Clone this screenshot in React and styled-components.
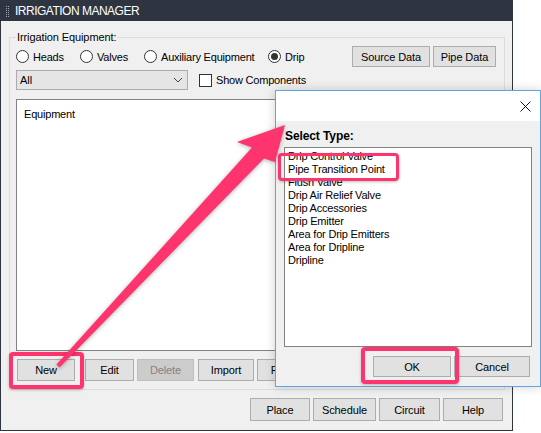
import React from 'react';
import styled, { createGlobalStyle } from 'styled-components';

const PINK = '#fd346e';

const GlobalStyle = createGlobalStyle`
  html, body {
    margin: 0;
    padding: 0;
    background: #fff;
  }
  body {
    font-family: "Liberation Sans", Arial, sans-serif;
    font-size: 11px;
    color: #000;
  }
  * {
    box-sizing: border-box;
  }
`;

const Stage = styled.div`
  position: relative;
  width: 541px;
  height: 433px;
  overflow: hidden;
`;

const Window = styled.div`
  width: 513px;
  height: 431px;
  background: #f0f0f0;
  border: 1px solid #2e3440;
  display: flex;
  flex-direction: column;
`;

const TitleBar = styled.div`
  height: 20px;
  flex-shrink: 0;
  background: #2e3440;
  color: #fff;
  display: flex;
  align-items: center;
  gap: 6px;
  padding-left: 5px;
  font-size: 12px;
  letter-spacing: -0.5px;

  .grip {
    width: 3px;
    height: 11px;
    background-image:
      linear-gradient(to right, transparent 1px, #2e3440 1px),
      linear-gradient(to bottom, #a3a9b4 1px, transparent 1px);
    background-size: 2px 2px, 2px 2px;
  }
`;

const Group = styled.fieldset`
  margin: 9px 7px 0 8px;
  padding: 0 7px 0 6px;
  height: 360px;
  border: 1px solid #dcdcdc;
  display: flex;
  flex-direction: column;

  legend {
    padding: 0 1px;
    font-size: 11px;
    line-height: 14px;
    letter-spacing: -0.1px;
  }
`;

const Row = styled.div`
  display: flex;
  align-items: center;
  height: ${p => p.h}px;
  margin-top: ${p => p.mt}px;
`;

const RadioItem = styled.label`
  display: flex;
  align-items: center;
  gap: 4px;
  width: ${p => p.w}px;
  letter-spacing: -0.2px;
`;

const RadioDot = styled.span`
  width: 13px;
  height: 13px;
  border-radius: 50%;
  border: 1px solid #333;
  background: #fff;
  display: flex;
  align-items: center;
  justify-content: center;

  &::after {
    content: '';
    width: 7px;
    height: 7px;
    border-radius: 50%;
    background: ${p => (p.checked ? '#333' : 'transparent')};
  }
`;

const Button = styled.button`
  width: ${p => p.w}px;
  height: ${p => p.h || 22}px;
  margin-left: ${p => p.ml || 0}px;
  padding: 0;
  flex-shrink: 0;
  background: ${p => (p.disabled ? '#cccccc' : '#e1e1e1')};
  border: 1px solid ${p => (p.disabled ? '#bfbfbf' : '#adadad')};
  color: ${p => (p.disabled ? '#838383' : '#000')};
  font-family: inherit;
  font-size: 11px;
  letter-spacing: -0.1px;
  white-space: nowrap;
  overflow: hidden;
`;

const Select = styled.div`
  width: 172px;
  height: 20px;
  background: #e5e5e5;
  border: 1px solid #acacac;
  display: flex;
  align-items: center;
  justify-content: space-between;
  padding: 0 4px 0 3px;
`;

const Check = styled.label`
  display: flex;
  align-items: center;
  gap: 4px;
  margin-left: 11px;
  letter-spacing: -0.2px;

  span {
    width: 13px;
    height: 13px;
    border: 1px solid #333;
    background: #fff;
  }
`;

const ListBox = styled.div`
  background: #fff;
  border: 1px solid #828282;
  width: ${p => p.w}px;
  height: ${p => p.h}px;
  margin-top: ${p => p.mt}px;
  padding: ${p => p.pad};
  line-height: ${p => p.lh}px;
  letter-spacing: -0.2px;
`;

const BottomRow = styled.div`
  display: flex;
  justify-content: flex-end;
  margin-top: 8px;
  padding-right: 9px;
  gap: 3px;
`;

const Dialog = styled.div`
  position: absolute;
  left: 275px;
  top: 90px;
  width: 266px;
  height: 297px;
  border: 1px solid #5ea6e3;
  background: #f0f0f0;
  box-shadow: 0 0 10px rgba(0, 0, 0, 0.18);
  display: flex;
  flex-direction: column;
`;

const DialogHead = styled.div`
  height: 30px;
  background: #fff;
  display: flex;
  align-items: center;
  justify-content: flex-end;
  padding-right: 9px;
`;

const DialogBody = styled.div`
  padding: 0 8px;
  display: flex;
  flex-direction: column;

  h4 {
    margin: 8px 0 0 1px;
    font-size: 12px;
    line-height: 14px;
    font-weight: bold;
    letter-spacing: -0.1px;
  }
`;

const DialogButtons = styled.div`
  display: flex;
  justify-content: flex-end;
  gap: 3px;
  margin-top: 9px;
  padding-right: 2px;
`;

const Highlight = styled.div`
  position: absolute;
  left: ${p => p.x}px;
  top: ${p => p.y}px;
  width: ${p => p.w}px;
  height: ${p => p.h}px;
  border: ${p => p.b}px solid ${PINK};
  border-radius: 4px;
  box-shadow: 0 1px 3px rgba(0, 0, 0, 0.25);
  pointer-events: none;
`;

const Overlay = styled.svg`
  position: absolute;
  left: 0;
  top: 0;
  pointer-events: none;
  filter: drop-shadow(0 1px 2px rgba(0, 0, 0, 0.3));
`;

const types = [
  'Drip Control Valve',
  'Pipe Transition Point',
  'Flush Valve',
  'Drip Air Relief Valve',
  'Drip Accessories',
  'Drip Emitter',
  'Area for Drip Emitters',
  'Area for Dripline',
  'Dripline',
];

export default function App() {
  return (
    <Stage>
      <GlobalStyle />
      <Window>
        <TitleBar>
          <span className="grip" />
          IRRIGATION MANAGER
        </TitleBar>

        <Group>
          <legend>Irrigation Equipment:</legend>
          <Row h={21} mt={2}>
            <RadioItem w={64}><RadioDot />Heads</RadioItem>
            <RadioItem w={64}><RadioDot />Valves</RadioItem>
            <RadioItem w={124}><RadioDot />Auxiliary Equipment</RadioItem>
            <RadioItem w={60}><RadioDot checked />Drip</RadioItem>
            <Button w={78} h={21} style={{ marginLeft: 'auto' }}>Source Data</Button>
            <Button w={63} h={21} ml={3}>Pipe Data</Button>
            <span style={{ width: 1 }} />
          </Row>
          <Row h={20} mt={3}>
            <Select>
              All
              <svg width="10" height="6" viewBox="0 0 10 6">
                <path d="M1 1 L5 5 L9 1" fill="none" stroke="#444" strokeWidth="1" />
              </svg>
            </Select>
            <Check><span />Show Components</Check>
          </Row>
          <ListBox w={480} h={252} mt={9} pad="7px 7px" lh={14}>Equipment</ListBox>
          <Row h={22} mt={8}>
            <Button w={58} ml={1}>New</Button>
            <Button w={49} ml={10}>Edit</Button>
            <Button w={57} ml={3} disabled>Delete</Button>
            <Button w={56} ml={4}>Import</Button>
            <Button w={60} ml={3}>Report</Button>
          </Row>
        </Group>

        <BottomRow>
          <Button w={60} h={23}>Place</Button>
          <Button w={63} h={23}>Schedule</Button>
          <Button w={61} h={23}>Circuit</Button>
          <Button w={60} h={23}>Help</Button>
        </BottomRow>
      </Window>

      <Dialog>
        <DialogHead>
          <svg width="11" height="11" viewBox="0 0 11 11">
            <path d="M0.5 0.5 L10.5 10.5 M10.5 0.5 L0.5 10.5" stroke="#111" strokeWidth="1" />
          </svg>
        </DialogHead>
        <DialogBody>
          <h4>Select Type:</h4>
          <ListBox w={248} h={200} mt={4} pad="2px 3px" lh={13}>
            {types.map(t => (
              <div key={t}>{t}</div>
            ))}
          </ListBox>
          <DialogButtons>
            <Button w={78} h={21}>OK</Button>
            <Button w={76} h={21}>Cancel</Button>
          </DialogButtons>
        </DialogBody>
      </Dialog>

      <Highlight x={278} y={153} w={121} h={28} b={3} />
      <Highlight x={361} y={347} w={98} h={37} b={4} />
      <Highlight x={9} y={352} w={75} h={37} b={4} />

      <Overlay width="541" height="433" viewBox="0 0 541 433">
        <polygon
          fill={PINK}
          points="56.5,364.6 252,147.5 237,142 285,125 275,162 264,158.5 59.5,367.4"
        />
      </Overlay>
    </Stage>
  );
}
